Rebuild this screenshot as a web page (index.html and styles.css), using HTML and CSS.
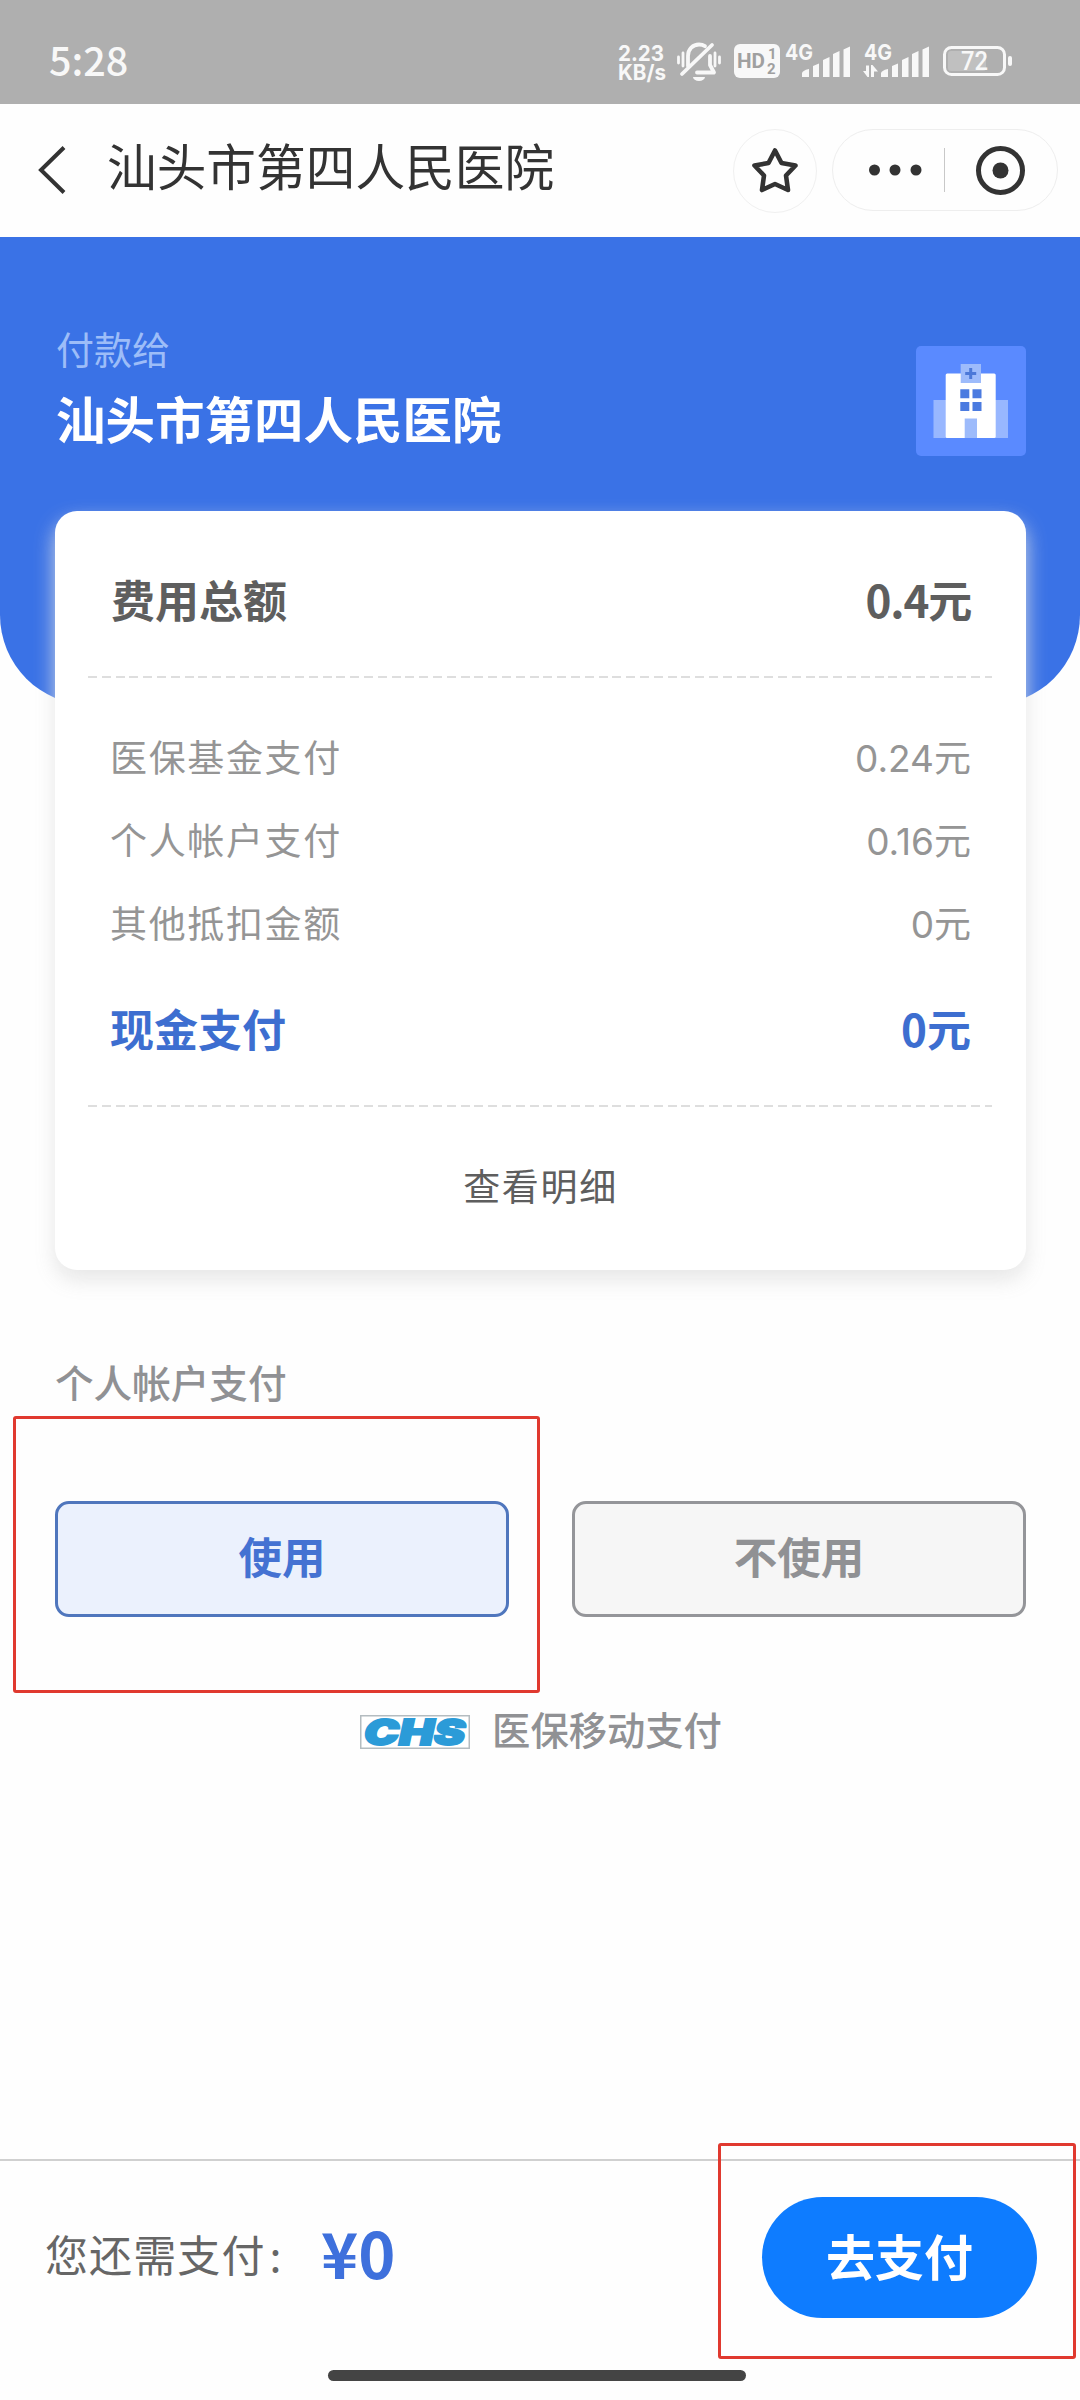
FILE: index.html
```html
<!DOCTYPE html>
<html lang="zh-CN">
<head>
<meta charset="utf-8">
<title>汕头市第四人民医院</title>
<link rel="stylesheet" href="styles.css">
</head>
<body>
<div class="screen">
  <header class="status">
    <span class="clock">5:28</span>
    <svg class="status-icons" width="396" height="44" viewBox="617 40 396 44">
      <g class="st-text">
        <text x="618" y="61" font-size="22" textLength="46" lengthAdjust="spacingAndGlyphs">2.23</text>
        <text x="618" y="80" font-size="21" textLength="48" lengthAdjust="spacingAndGlyphs">KB/s</text>
        <text x="785" y="60" font-size="22" textLength="28" lengthAdjust="spacingAndGlyphs">4G</text>
        <text x="864" y="60" font-size="22" textLength="28" lengthAdjust="spacingAndGlyphs">4G</text>
      </g>
      <g fill="none" stroke="#f8f8f8" stroke-width="3.8" stroke-linecap="round" stroke-linejoin="round">
        <path d="M688 66V56c0-7 5-11.500 11-11.500 2.500 0 4.500.700 6 1.700M710 56v9l4 7.500h-17M712 45 682 74" />
        <path d="M683 53v13M678.500 57v6M715 53v13M719.500 57v6" stroke-width="2.800"/>
      </g>
      <path d="M693 77h12a6 4 0 0 1-12 0z" fill="#f8f8f8"/>
      <rect x="734" y="44" width="46" height="34" rx="6" fill="#f8f8f8"/>
      <g class="hd-text">
        <text x="737" y="68" font-size="21" textLength="28" lengthAdjust="spacingAndGlyphs">HD</text>
        <text x="768" y="59" font-size="15">1</text>
        <text x="767" y="74" font-size="15">2</text>
      </g>
      <g fill="#f8f8f8">
        <path id="bars" d="M802 77v-3.500q0-3 7-4.500v8zM813 77V66l6-2.500V77zM823 77V60l6.500-3v20zM833 77V54l6.500-3v26zM843.500 77V49.500l6.500-3V77z"/>
        <use href="#bars" x="79"/>
        <path d="M863 71h3v-5.500h3V77h-1.500zM871 65h1.500l5.500 6.500h-4V77h-3z"/>
      </g>
      <rect x="944.500" y="47.500" width="60" height="27" rx="7" fill="none" stroke="#f8f8f8" stroke-width="3"/>
      <rect x="948" y="51" width="38" height="20" rx="3" fill="#c0c0c0"/>
      <rect x="1008" y="56" width="4" height="10" rx="2" fill="#f8f8f8"/>
      <text class="batt" x="961" y="70" font-size="25" textLength="27" lengthAdjust="spacingAndGlyphs">72</text>
    </svg>
  </header>

  <nav class="nav">
    <svg class="back" width="30" height="50" viewBox="0 0 30 50"><path d="M27 2.500 4 25 27 47.500" fill="none" stroke="#333" stroke-width="4"/></svg>
    <h1 class="nav-title">汕头市第四人民医院</h1>
    <div class="fav">
      <svg width="50" height="50" viewBox="-25 -25 50 50"><path d="M0-20.500 6.500-8 20.500-5.500 11 4.500 13 19 0 13-13 19-11 4.500-20.500-5.500-6.500-8z" fill="none" stroke="#333" stroke-width="4.600" stroke-linejoin="round"/></svg>
    </div>
    <div class="capsule">
      <svg width="224" height="80" viewBox="833 130 224 80">
        <g fill="#333"><circle cx="874.500" cy="170" r="5.500"/><circle cx="895" cy="170" r="5.500"/><circle cx="916" cy="170" r="5.500"/><circle cx="1000.500" cy="170.500" r="8"/></g>
        <path d="M944.500 148v44" stroke="#c8c8c8"/>
        <circle cx="1000.500" cy="170.500" r="22" fill="none" stroke="#333" stroke-width="5"/>
      </svg>
    </div>
  </nav>

  <section class="hero">
    <div class="payee">
      <p class="payee-label">付款给</p>
      <p class="payee-name">汕头市第四人民医院</p>
    </div>
    <svg class="hospital" width="110" height="110" viewBox="916 346 110 110">
      <rect x="916" y="346" width="110" height="110" rx="5" fill="#5a8aff"/>
      <path d="M933.500 400H1008v38h-74.500z" fill="#98b7ff"/>
      <rect x="945.700" y="373.500" width="50" height="64.500" rx="1.500" fill="#fff"/>
      <path d="M960.700 364H981v19h-20.300z" fill="#9dbbfb"/>
      <path d="M970.700 368v11M965.200 373.500h11" stroke="#4b78d8" stroke-width="3"/>
      <path d="M960.300 389.300h9v9h-9zM972.500 389.300h9v9h-9zM960.300 402h9v9h-9zM972.500 402h9v9h-9z" fill="#4b7be0"/>
      <path d="M964.700 418.500H977V438h-12.300z" fill="#9dbbfb"/>
    </svg>
  </section>

  <section class="card">
    <div class="row total"><span>费用总额</span><span class="amt">0.4元</span></div>
    <hr class="dash">
    <div class="items">
      <div class="row item"><span>医保基金支付</span><span class="num">0.24元</span></div>
      <div class="row item"><span>个人帐户支付</span><span class="num">0.16元</span></div>
      <div class="row item"><span>其他抵扣金额</span><span class="num">0元</span></div>
    </div>
    <div class="row cash"><span>现金支付</span><span>0元</span></div>
    <hr class="dash">
    <div class="detail">查看明细</div>
  </section>

  <h2 class="section-label">个人帐户支付</h2>
  <div class="choices">
    <div class="choice on">使用</div>
    <div class="choice">不使用</div>
  </div>

  <div class="brand">
    <svg class="chs-logo" width="110" height="34" viewBox="0 0 110 34">
      <rect x=".75" y=".75" width="108.500" height="32.500" fill="#fff" stroke="#b4bcc0" stroke-width="1.500"/>
      <text class="chs" x="4" y="29.500" font-size="35" textLength="101" lengthAdjust="spacingAndGlyphs">CHS</text>
    </svg>
    <span>医保移动支付</span>
  </div>

  <footer class="paybar">
    <span class="due">您还需支付<i class="colon">:</i></span>
    <span class="sum">¥0</span>
    <div class="pay">去支付</div>
  </footer>
  <div class="home"></div>

  <div class="mark mark-use"></div>
  <div class="mark mark-pay"></div>
</div>
</body>
</html>
```
FILE: styles.css
```css
* { box-sizing: border-box; margin: 0; padding: 0; }
body { background: #fefefe; font-family: "Noto Sans CJK SC", sans-serif; }
.screen { position: relative; width: 1080px; height: 2400px; overflow: hidden; display: flex; flex-direction: column; background: #fefefe; }
svg { display: block; flex: none; }

.status { height: 104px; flex: none; background: #afafaf; display: flex; align-items: center; justify-content: space-between; padding: 20px 67px 0 49px; }
.status-icons, .chs-logo { overflow: visible; }
.clock { font-size: 39.500px; font-weight: 500; color: #f8f8f8; line-height: 44px; margin-top: -6px; }
.st-text { fill: #f8f8f8; font-family: Inter, sans-serif; font-weight: 700; }
.hd-text { fill: #a0a0a0; font-family: Roboto, sans-serif; font-weight: 700; }
.batt { fill: #f8f8f8; font-family: Roboto, sans-serif; font-weight: 500; }

.nav { height: 133px; flex: none; display: flex; align-items: center; padding: 0 22px 0 37px; }
.back { margin-top: -2px; }
.nav-title { flex: 1; margin: -13px 0 0 40px; font-size: 49.700px; font-weight: 400; color: #333; line-height: 60px; }
.fav { width: 84px; height: 84px; border: 1px solid #f0f0f0; border-radius: 50%; display: grid; place-items: center; margin: 1px 15px 0 0; }
.capsule { width: 226px; height: 82px; border: 1px solid #eee; border-radius: 41px; margin-top: -2px; }

.hero { height: 468px; flex: none; background: #3a72e6; border-radius: 0 0 90px 90px; display: flex; justify-content: space-between; align-items: flex-start; padding: 83px 54px 0 56px; }
.hospital { margin-top: 26px; }
.payee-label { font-size: 38px; line-height: 56px; color: #9dbdf8; }
.payee-name { font-size: 49.500px; font-weight: 700; line-height: 70px; margin-top: 7px; color: #fff; }

.card { height: 759px; flex: none; margin: -194px 54px 0 55px; border-radius: 22px; background: #fff; box-shadow: 0 10px 20px #e4e4e4e0; }
.row { display: flex; justify-content: space-between; align-items: center; padding: 0 55px 0 56px; }
.total { height: 165px; padding-top: 10px; font-size: 44px; font-weight: 700; color: #5e5e5e; }
.amt { letter-spacing: -1.200px; }
.dash { border: 0; height: 2px; margin: 0 34px 0 33px; background: repeating-linear-gradient(90deg, #dedede 0 9px, transparent 9px 13.800px); }
.items { padding-top: 37px; }
.item { height: 82.700px; padding: 0 55px; font-size: 37px; letter-spacing: 1.650px; color: #959595; }
.num { font-family: Inter, "Noto Sans CJK SC", sans-serif; letter-spacing: 0; }
.cash { height: 142px; padding: 0 55px 12px 55px; font-size: 44px; font-weight: 700; color: #3d6ed0; }
.detail { height: 158px; display: grid; place-items: center; font-size: 37px; letter-spacing: 1.650px; color: #5e5e5e; padding-bottom: 3px; }

.section-label { margin: 83px 0 0 55px; font-size: 38.600px; line-height: 56px; font-weight: 500; color: #909194; }
.choices { display: flex; gap: 63px; margin: 92px 54px 0 55px; }
.choice { flex: 1; height: 116px; border: 3px solid #949599; border-radius: 14px; background: #f6f6f6; color: #909194; font-size: 43.500px; font-weight: 700; display: grid; place-items: center; padding-bottom: 8px; }
.choice.on { border-color: #4f76bd; background: #ebf1fd; color: #4472d2; }

.brand { display: flex; justify-content: center; align-items: center; gap: 22px; margin-top: 86px; height: 56px; padding-left: 2px; font-size: 38.300px; font-weight: 500; color: #909194; }
.brand svg { margin-top: 1px; }
.brand span { margin-top: -5px; }
.chs { font-family: Inter, sans-serif; font-weight: 900; font-style: italic; fill: #2b9bd8; stroke: #2b9bd8; stroke-width: 2px; }

.paybar { margin-top: auto; height: 211px; flex: none; border-top: 2px solid #d0d0d0; display: flex; align-items: flex-start; padding: 36px 43px 0 45px; }
.due { font-size: 43px; letter-spacing: 1.100px; color: #666; line-height: 112px; width: 276px; white-space: nowrap; }
.colon { font-style: normal; margin-left: 4px; }
.sum { flex: 1; font-size: 63px; font-weight: 700; line-height: 109px; color: #3e70dc; }
.pay { width: 275px; height: 121px; border-radius: 61px; background: #0e7cff; color: #fff; font-size: 49px; font-weight: 700; display: grid; place-items: center; padding-bottom: 7px; }
.home { flex: none; width: 418px; height: 11px; margin: 0 0 19px 328px; border-radius: 6px; background: #444; }

.mark { position: absolute; border: 3px solid #e0392f; border-radius: 3px; }
.mark-use { left: 13px; top: 1416px; width: 527px; height: 277px; }
.mark-pay { left: 718px; top: 2143px; width: 358px; height: 216px; }
```
